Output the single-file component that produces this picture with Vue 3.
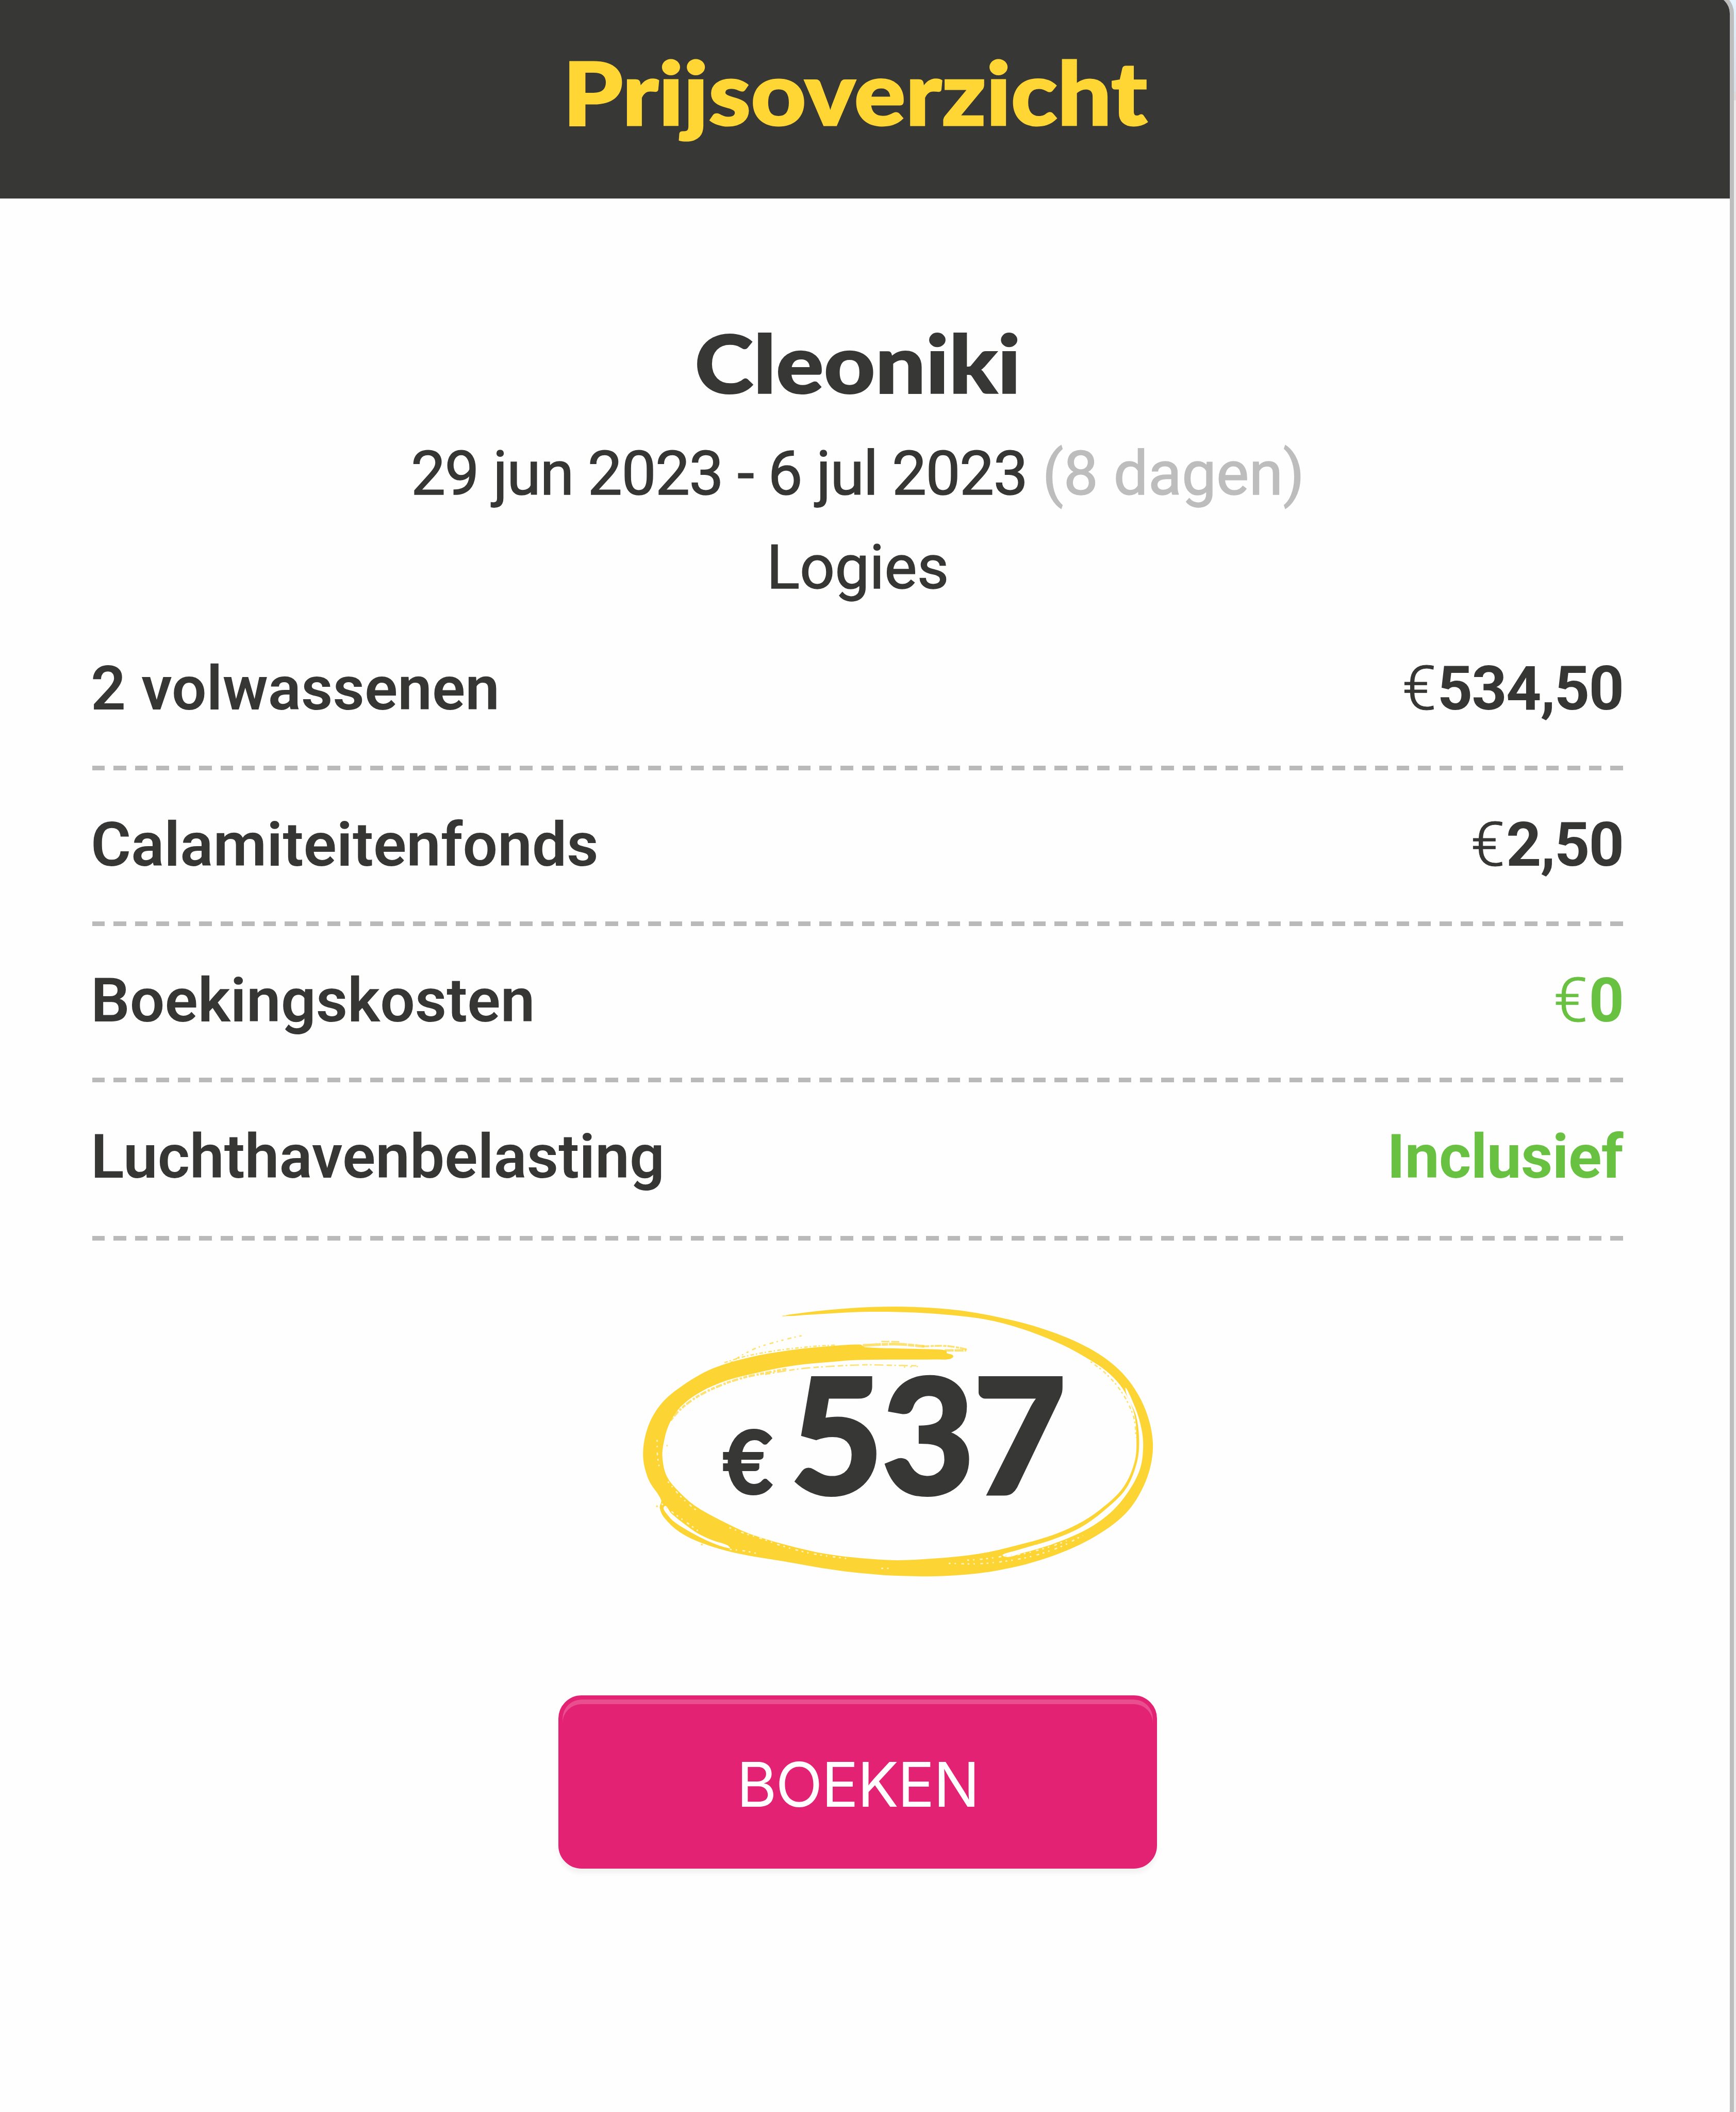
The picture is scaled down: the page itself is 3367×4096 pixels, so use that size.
<template>
  <div class="page">
    <section class="card">
      <header class="card-header">
        <h2 class="card-title">Prijsoverzicht</h2>
      </header>

      <div class="card-body">
        <h3 class="hotel">Cleoniki</h3>
        <p class="info"><span class="dates">29 jun 2023 - 6 jul 2023</span> <span class="days">(8 dagen)</span></p>
        <p class="info">Logies</p>

        <ul class="rows">
          <li v-for="row in rows" :key="row.label" class="row">
            <span class="label">{{ row.label }}</span>
            <span class="amount" :class="{ 'free': row.free, 'text': !row.currency }">
              <span v-if="row.currency" class="currency">€</span>{{ row.value }}
            </span>
          </li>
        </ul>

        <div class="total">
          <svg class="circle" viewBox="0 0 1170 620">
            <path :d="smooth(brush, true)" class="ink" />
            <path :d="smooth(gapRight, true)" class="gap" />
            <path :d="smooth(gapLeft, true)" class="gap" />
            <path
              v-for="(line, i) in bristles"
              :key="'b' + i"
              :d="smooth(line.points)"
              class="bristle"
              :stroke-width="line.width"
              :stroke-dasharray="line.dash"
            />
            <path
              v-for="(line, i) in scratches"
              :key="'s' + i"
              :d="smooth(line)"
              class="scratch"
            />
          </svg>
          <span class="total-currency">€</span>
          <span class="total-value">537</span>
        </div>

        <button class="book" type="button">BOEKEN</button>
      </div>
    </section>
  </div>
</template>

<script setup>
const rows = [
  { label: '2 volwassenen', currency: true, value: '534,50' },
  { label: 'Calamiteitenfonds', currency: true, value: '2,50' },
  { label: 'Boekingskosten', currency: true, value: '0', free: true },
  { label: 'Luchthavenbelasting', value: 'Inclusief', free: true },
];

// outline of the brush stroke: outer edge first, then back along the inner edge
const brush = [
  [340, 30], [360, 26], [427, 18], [530, 11], [624, 11], [735, 20], [842, 41], [927, 66],
  [1013, 104], [1077, 151], [1120, 208], [1145, 273], [1150, 335], [1132, 403],
  [1090, 468], [1013, 524], [910, 568], [799, 595], [688, 606], [577, 605],
  [500, 599], [443, 592], [343, 575], [227, 555], [153, 533], [103, 508],
  [70, 477], [60, 455], [63, 438], [35, 392], [23, 337], [35, 273], [65, 223],
  [110, 185], [177, 147], [260, 122], [360, 105], [443, 97], [503, 94],
  [514, 100], [600, 103], [680, 105], [694, 108], [695, 113], [709, 119], [701, 126],
  [667, 127], [500, 128], [443, 132], [360, 140], [277, 156], [210, 173],
  [150, 199], [106, 232], [80, 272], [68, 315], [66, 345], [75, 384], [100, 417],
  [137, 450], [193, 482], [260, 513], [343, 538], [427, 557], [510, 567],
  [585, 571], [671, 567], [765, 557], [850, 538], [927, 516], [983, 492],
  [1034, 459], [1085, 410], [1111, 350], [1114, 290], [1110, 250], [1098, 217],
  [1077, 182], [1047, 152], [1013, 129], [949, 94], [863, 60], [778, 38],
  [671, 26], [585, 22], [500, 22], [443, 25], [377, 29],
];

const gapRight = [
  [1090, 193], [1111, 232], [1126, 283], [1129, 325], [1122, 370], [1098, 417],
  [1060, 463], [1004, 503], [927, 536], [863, 555], [820, 562], [850, 549],
  [927, 526], [990, 499], [1042, 462], [1091, 413], [1116, 352], [1120, 300],
  [1113, 250],
];

const gapLeft = [
  [70, 452], [80, 474], [96, 489], [132, 511], [172, 531], [215, 545], [210, 538],
  [177, 527], [143, 511], [112, 489], [86, 468],
];

const bristles = [
  { width: 5, dash: '9 3 14 4 5 3', points: [[84, 262], [97, 246], [119, 226], [152, 204], [200, 182], [246, 167], [293, 157], [340, 148]] },
  { width: 3, dash: '12 5 4 6 20 7', points: [[293, 160], [360, 149], [410, 144], [510, 139], [577, 140], [630, 141]] },
  { width: 3, dash: '3 11', points: [[600, 144], [640, 142]] },
  { width: 3, dash: '5 9 9 7 3 8', points: [[217, 134], [243, 117], [273, 102], [300, 93], [357, 78], [382, 73]] },
  { width: 3, dash: '8 4 3 5', points: [[203, 134], [250, 120], [320, 107], [400, 98], [450, 95]] },
  { width: 3, dash: '18 4', points: [[550, 87], [590, 88]] },
  { width: 6, dash: '40 2 14 2', points: [[509, 96], [580, 93], [645, 98]] },
  { width: 4, dash: '16 3 7 2', points: [[640, 98], [690, 97], [722, 101], [740, 105]] },
  { width: 5, dash: '20 2', points: [[690, 107], [738, 107]] },
  { width: 2, dash: '30 4', points: [[331, 31], [362, 29]] },
  { width: 4, dash: '4 7', points: [[52, 451], [62, 455]] },
  { width: 4, dash: '4 8', points: [[151, 536], [157, 537]] },
  { width: 3, dash: '4 7 8 5', points: [[1013, 132], [1043, 155], [1072, 186], [1095, 222], [1110, 262], [1113, 300]] },
  { width: 3, dash: '3 16', points: [[76, 316], [79, 335]] },
];

const scratches = [
  [[740, 571], [780, 568], [830, 561], [863, 557], [927, 540], [960, 528]],
  [[699, 578], [760, 579], [818, 574], [880, 563], [947, 541], [996, 516]],
  [[550, 589], [575, 589]],
  [[54, 305], [55, 340], [60, 372]],
  [[78, 397], [110, 434], [140, 460]],
  [[214, 499], [243, 510], [290, 525], [333, 540], [395, 556], [477, 568]],
  [[64, 446], [88, 465], [120, 488], [150, 510]],
  [[215, 547], [245, 550], [275, 556]],
];

// Catmull-Rom through the points, written as cubic beziers
function smooth(points, closed = false) {
  const n = points.length;
  const at = (i) => (closed ? points[(i + n) % n] : points[Math.max(0, Math.min(n - 1, i))]);
  let d = `M${points[0].join(' ')}`;
  for (let i = 0; i < (closed ? n : n - 1); i++) {
    const [a, b, c, e] = [at(i - 1), at(i), at(i + 1), at(i + 2)];
    // shorten the handles to the segment so that tight corners don't loop
    const len = Math.hypot(c[0] - b[0], c[1] - b[1]) / 3;
    const t1 = Math.hypot(c[0] - a[0], c[1] - a[1]) || 1;
    const t2 = Math.hypot(e[0] - b[0], e[1] - b[1]) || 1;
    const x1 = b[0] + ((c[0] - a[0]) / t1) * len;
    const y1 = b[1] + ((c[1] - a[1]) / t1) * len;
    const x2 = c[0] - ((e[0] - b[0]) / t2) * len;
    const y2 = c[1] - ((e[1] - b[1]) / t2) * len;
    d += `C${x1.toFixed(1)} ${y1.toFixed(1)} ${x2.toFixed(1)} ${y2.toFixed(1)} ${c[0]} ${c[1]}`;
  }
  return closed ? d + 'Z' : d;
}
</script>

<style>
body {
  margin: 0;
}
</style>

<style scoped>
.page {
  width: 3367px;
  height: 4096px;
  overflow: hidden;
  display: flow-root;
  background: linear-gradient(to bottom, #e3f2fc 0, #d6e1e9 177px, #dcdcdc 178px, #dcdcdc 194px, #ebebeb 195px);
  font-family: Roboto, 'Liberation Sans', sans-serif;
  color: #363635;
}

.card {
  box-sizing: border-box;
  width: 3363px;
  height: 4148px;
  margin-top: -16px;
  border: 8px solid #bebebe;
  border-left: none;
  border-radius: 0 42px 42px 0;
  background-color: #fefefe;
  overflow: hidden;
}

.card-header {
  box-sizing: border-box;
  height: 393px;
  padding: 10px 212px 0 174px;
  background-color: #373735;
}

.card-title {
  margin: 0;
  font-family: Lato, sans-serif;
  font-size: 170px;
  font-weight: 900;
  line-height: 350px;
  text-align: center;
  color: #ffd633;
  -webkit-text-stroke: 3px #ffd633;
  transform: scaleX(1.094);
}

.card-body {
  padding: 216px 207px 0 179px;
}

.hotel {
  margin: 0 0 22px;
  font-family: Lato, sans-serif;
  font-size: 156px;
  font-weight: 900;
  line-height: 204px;
  text-align: center;
  color: #373735;
  -webkit-text-stroke: 2px #373735;
  transform: scaleX(1.108);
}

.info {
  margin: 0;
  font-size: 119.5px;
  line-height: 182px;
  text-align: center;
  -webkit-text-stroke: 1.5px currentColor;
}

.dates {
  letter-spacing: -1.6px;
}

.days {
  color: #bdbdbd;
}

.rows {
  margin: 0;
  padding: 0;
  list-style: none;
}

.row {
  box-sizing: border-box;
  display: flex;
  justify-content: space-between;
  height: 302.6px;
  padding-top: 54px;
  font-size: 119.5px;
  font-weight: 600;
  line-height: 180px;
  background: repeating-linear-gradient(to right, #bababa 0, #bababa 24.4px, transparent 24.4px, transparent 41.47px) left bottom / 100% 9px no-repeat;
}

.row:last-child {
  height: 307px;
}

.label {
  margin-left: -3px;
}

.amount {
  font-weight: 700;
  letter-spacing: -2px;
}

.amount.text {
  letter-spacing: -0.6px;
}

.currency {
  margin-right: 4px;
  font-weight: 300;
  -webkit-text-stroke: 1px currentColor;
}

.free {
  color: #69c142;
}

.total {
  position: relative;
  display: flex;
  align-items: baseline;
  box-sizing: border-box;
  width: 1026px;
  height: 544px;
  margin: 119px 0 0 1048px;
  padding: 69px 0 0 174px;
  font-family: Lato, sans-serif;
  font-weight: 900;
  line-height: 366px;
  color: #373735;
}

.circle {
  position: absolute;
  inset: 0;
  width: 100%;
  height: 100%;
}

.ink {
  fill: #fcd535;
}

.gap {
  fill: #fefefe;
}

.bristle {
  fill: none;
  stroke: #fcd535;
  opacity: 0.7;
}

.scratch {
  fill: none;
  stroke: #fff3c4;
  stroke-width: 3;
  stroke-dasharray: 4 9 3 12 6 8;
}

.total-currency {
  font-size: 171px;
  -webkit-text-stroke: 2px #373735;
}

.total-value {
  margin-left: 32px;
  font-size: 312px;
  letter-spacing: -3.5px;
  -webkit-text-stroke: 5px #373735;
}

.book {
  display: block;
  box-sizing: border-box;
  width: 1161px;
  height: 336px;
  margin: 219px auto 0;
  padding: 10px 0 0;
  border: 8px solid #e42274;
  border-radius: 45px;
  background-color: #e42274;
  box-shadow: inset 0 9px 0 rgba(255, 255, 255, 0.2), 0 9px 9px rgba(0, 0, 0, 0.05);
  font-family: Inter, 'Liberation Sans', sans-serif;
  font-size: 119px;
  font-weight: 400;
  letter-spacing: -2px;
  color: #fff;
}
</style>
